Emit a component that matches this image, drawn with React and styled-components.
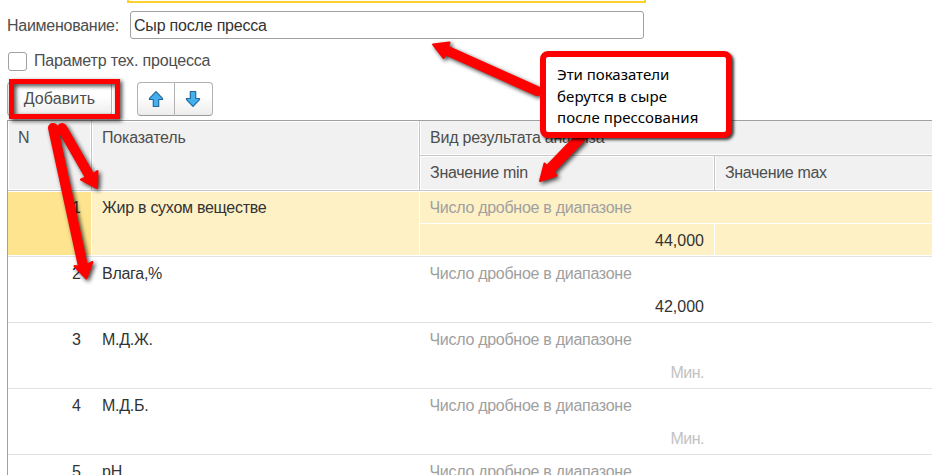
import React from "react";
import styled, { createGlobalStyle } from "styled-components";

const GlobalStyle = createGlobalStyle`
  *, *::before, *::after { box-sizing: border-box; }
  html, body { margin: 0; background: #fff; overflow: hidden; }
`;

const Page = styled.main`
  position: relative;
  width: 932px;
  height: 475px;
  overflow: hidden;
  background: #fff;
  color: #4d4d4d;
  font: 16px/20px "Liberation Sans", Arial, sans-serif;
  white-space: nowrap;
`;

const FocusedField = styled.div`
  width: 519px;
  height: 3px;
  margin-left: 127px;
  border: 2px solid #fcd12b;
  border-top: 0;
`;

const NameRow = styled.div`
  display: flex;
  align-items: center;
  height: 28px;
  margin-top: 8px;
  padding-left: 7px;
`;

const NameLabel = styled.label`
  width: 123px;
  padding-top: 1px;
  letter-spacing: -0.27px;
`;

const NameInput = styled.input`
  width: 514px;
  height: 28px;
  padding: 1px 3px 0;
  border: 1px solid #a0a0a0;
  border-radius: 3px;
  outline: 0;
  color: #333;
  font: inherit;
  letter-spacing: -0.2px;
`;

const CheckRow = styled.label`
  display: flex;
  align-items: center;
  gap: 7px;
  height: 21px;
  margin-top: 11px;
  padding: 1px 0 0 8px;
`;

const CheckBox = styled.span`
  width: 19px;
  height: 19px;
  border: 1px solid #a0a0a0;
  border-radius: 3px;
`;

const Toolbar = styled.div`
  display: flex;
  gap: 25px;
  height: 34px;
  margin-top: 11px;
  padding-left: 7px;
`;

const Button = styled.button`
  display: flex;
  align-items: center;
  justify-content: center;
  width: ${(p) => p.$width}px;
  height: 34px;
  padding: 0;
  border: 1px solid #b2b2b2;
  border-bottom-color: #999;
  border-radius: 4px;
  background: linear-gradient(#fff 40%, #ededed);
  color: #4d4d4d;
  font: inherit;
`;

const ButtonGroup = styled.div`
  display: flex;

  ${Button}:first-child { border-radius: 4px 0 0 4px; }
  ${Button}:last-child { border-radius: 0 4px 4px 0; border-left: 0; padding-right: 1px; }
`;

const Table = styled.section`
  width: 925px;
  margin: 4px 0 0 7px;
  border: solid #a0a0a0;
  border-width: 1px 0 0 1px;
`;

const Header = styled.div`
  display: grid;
  grid-template: 35px 35px / 84px 328px 295px 1fr;
  height: 70px;
`;

const HeadCell = styled.div`
  grid-row: ${(p) => p.$row || "auto"};
  grid-column: ${(p) => p.$col};
  padding: 7px 10px 0;
  border: solid #c6c6c6;
  border-width: 0 ${(p) => (p.$last ? 0 : 1)}px 1px 0;
  background: #f1f1f1;
  box-shadow: inset ${(p) => (p.$last ? "1px -1px 0 0" : "0 0 0 1px")} #fff;
  letter-spacing: ${(p) => p.$track || 0}px;
`;

const Row = styled.div`
  display: grid;
  grid-template: 31px 31px / 83px 327px 294px 1fr;
  gap: 1px;
  height: 66px;
  padding: 1px 0;
  border-bottom: 1px solid #e2e2e2;
  color: #333;
`;

const Cell = styled.div`
  grid-row: ${(p) => p.$row};
  grid-column: ${(p) => p.$col};
  padding: ${(p) => p.$top || 6}px 10px 0;
  text-align: ${(p) => (p.$right ? "right" : "left")};
  color: ${(p) => p.$color || "inherit"};
  background: ${(p) => p.$fill || "transparent"};
`;

const Text = styled.span`
  letter-spacing: ${(p) => p.$track || 0}px;
`;

const KindText = styled(Text)`
  margin-left: -0.6px;
`;

const Annotations = styled.svg`
  position: absolute;
  inset: 0;
  filter: drop-shadow(2px 2px 2px rgba(0, 0, 0, 0.75));
  pointer-events: none;
`;

const Callout = styled.aside`
  position: absolute;
  left: 540px;
  top: 51px;
  width: 192px;
  height: 87px;
  padding: 7px 11px;
  border: 6px solid #fe0000;
  border-radius: 8px;
  background: #fff;
  box-shadow: 2px 2px 3px rgba(0, 0, 0, 0.75);
  color: #000;
  font: 15px/21.5px "Noto Sans", "Open Sans", sans-serif;
`;

const CalloutLine = styled.div`
  letter-spacing: ${(p) => p.$track}px;
`;

const ArrowIcon = ({ down }) => (
  <svg width="16" height="18" viewBox="0 0 16 18">
    <path
      d="M8 1.6 14.5 8.4V9.5H10.7V16.5H5.3V9.5H1.5V8.4Z"
      transform={down ? "rotate(180 8 9)" : undefined}
      fill="#45b0ee"
      stroke="#21699c"
      strokeWidth="1.2"
      strokeLinejoin="round"
    />
  </svg>
);

const rows = [
  { name: "Жир в сухом веществе", value: "44,000", selected: true },
  { name: "Влага,%", value: "42,000" },
  { name: "М.Д.Ж." },
  { name: "М.Д.Б." },
  { name: "pH" },
];

function IndicatorRow({ index, name, value, selected }) {
  const fill = selected ? "#fef1c6" : undefined;
  return (
    <Row>
      <Cell $row="1 / 3" $col="1" $right $fill={selected ? "#fee48f" : undefined}>{index}</Cell>
      <Cell $row="1 / 3" $col="2" $fill={fill}><Text $track={-0.27}>{name}</Text></Cell>
      <Cell $row="1" $col="3 / 5" $color="#a0a0a0" $fill={fill}>
        <KindText $track={-0.28}>Число дробное в диапазоне</KindText>
      </Cell>
      <Cell $row="2" $col="3" $top={7} $right $color={value ? "#333" : "#c2c2c2"} $fill={fill}>
        <Text $track={value ? 0 : -0.5}>{value || "Мин."}</Text>
      </Cell>
      <Cell $row="2" $col="4" $fill={fill} />
    </Row>
  );
}

export default function App() {
  return (
    <Page>
      <GlobalStyle />
      <FocusedField />
      <NameRow>
        <NameLabel htmlFor="name">Наименование:</NameLabel>
        <NameInput id="name" defaultValue="Сыр после пресса" />
      </NameRow>
      <CheckRow>
        <CheckBox />
        <Text $track={-0.17}>Параметр тех. процесса</Text>
      </CheckRow>
      <Toolbar>
        <Button $width={105}><Text $track={0.1}>Добавить</Text></Button>
        <ButtonGroup>
          <Button $width={38}><ArrowIcon /></Button>
          <Button $width={38}><ArrowIcon down /></Button>
        </ButtonGroup>
      </Toolbar>
      <Table>
        <Header>
          <HeadCell $row="1 / 3" $col="1">N</HeadCell>
          <HeadCell $row="1 / 3" $col="2" $track={-0.2}>Показатель</HeadCell>
          <HeadCell $row="1" $col="3 / 5" $track={-0.23} $last>Вид результата анализа</HeadCell>
          <HeadCell $row="2" $col="3" $track={-0.27}>Значение min</HeadCell>
          <HeadCell $row="2" $col="4" $track={-0.32} $last>Значение max</HeadCell>
        </Header>
        {rows.map((row, i) => <IndicatorRow key={row.name} index={i + 1} {...row} />)}
      </Table>
      <Annotations width="932" height="475" viewBox="0 0 932 475">
        <rect x="11.5" y="81.5" width="106" height="35" fill="none" stroke="#fe0000" strokeWidth="5" />
        <g stroke="#fe0000" strokeWidth="10" strokeLinecap="round">
          <path d="M53 128 82.5 264M62 128 89 175M537 91 449 51.5" />
          <path d="M580 138 551 168" strokeWidth="11" />
        </g>
        <g fill="#fe0000" stroke="#fe0000" strokeWidth="2" strokeLinejoin="round">
          <path d="M86.3 278.5 74.5 266 83 267 92.5 262Z" />
          <path d="M97 188 81 179.5 90 176 97.5 171Z" />
          <path d="M433 44.5 449.5 42.5 447 50 443.5 58Z" />
          <path d="M540 181 544.5 163.5 550 169 556.5 175.5Z" />
        </g>
      </Annotations>
      <Callout>
        <CalloutLine $track={-0.03}>Эти показатели</CalloutLine>
        <CalloutLine $track={0.1}>берутся в сыре</CalloutLine>
        <CalloutLine $track={0.07}>после прессования</CalloutLine>
      </Callout>
    </Page>
  );
}
